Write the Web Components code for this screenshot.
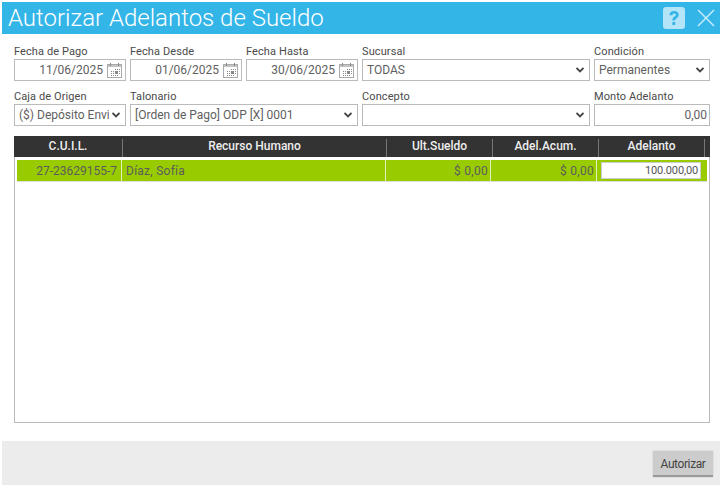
<!DOCTYPE html>
<html lang="es">
<head>
<meta charset="utf-8">
<title>Autorizar Adelantos de Sueldo</title>
<style>
	html, body { margin: 0; background: #fff; }
	body { font-family: Roboto, "Liberation Sans", sans-serif; overflow: hidden; }
</style>
</head>
<body>
<template id="tpl-dialog">
	<style>
		:host { display: flex; flex-direction: column; width: 718px; height: 483px; margin: 2px; background: #fff; }
		header { height: 32px; flex: none; display: flex; align-items: center; background: #33b5e8; color: #fff; padding: 0 5px 0 6px; box-sizing: border-box; }
		h1 { flex: 1; margin: 0; font-size: 24px; font-weight: 300; line-height: 32px; }
		.help { display: block; margin-right: 12px; }
		.close { display: block; }
		main { flex: 1; display: flex; flex-direction: column; padding: 11px 10px 18px 12px; min-height: 0; }
		footer { flex: none; height: 44px; background: #ececec; display: flex; justify-content: flex-end; align-items: flex-start; padding: 10px 7px 0 0; box-sizing: border-box; }
	</style>
	<header>
		<h1><slot name="title"></slot></h1>
		<svg class="help" width="22" height="22" viewBox="0 0 22 22">
			<rect width="22" height="22" rx="3" fill="#b4e4f8"/>
			<path d="M6.500 8.200C6.500 5.600 8.400 4 11.100 4c2.700 0 4.600 1.500 4.600 3.800 0 1.700-.9 2.600-2.100 3.400-1.100.7-1.400 1.100-1.400 2.300h-2.800c0-2 .5-2.900 1.800-3.800 1-.7 1.600-1.100 1.600-1.800 0-.8-.7-1.300-1.600-1.300-1 0-1.700.6-1.800 1.700z" fill="#33b5e8"/>
			<rect x="9.400" y="15" width="2.800" height="3" fill="#33b5e8"/>
		</svg>
		<svg class="close" width="18" height="18" viewBox="0 0 18 18" fill="none" stroke="#c6ecfb" stroke-width="1.500">
			<path d="M1 1l16 16M17 1L1 17"/>
		</svg>
	</header>
	<main><slot></slot></main>
	<footer><slot name="footer"></slot></footer>
</template>

<template id="tpl-form-grid">
	<style>
		:host { display: grid; grid-template-columns: 112px 112px 112px 228px 116px; column-gap: 4px; row-gap: 9px; flex: none; }
	</style>
	<slot></slot>
</template>

<template id="tpl-form-field">
	<style>
		:host { display: block; font-size: 11px; color: #4a4a4a; }
		label { display: block; height: 14px; line-height: 14px; letter-spacing: .1px; }
		.box { display: flex; align-items: center; height: 22px; box-sizing: border-box; border: 1px solid #bbb; background: #fff; color: #5f5f5f; font-size: 12px; }
		.txt { flex: 1; min-width: 0; white-space: nowrap; overflow: hidden; }
		:host([kind="date"]) .txt { text-align: right; padding-right: 4px; }
		:host([kind="number"]) .txt { text-align: right; padding-right: 2px; }
		:host([kind="select"]) .txt { padding-left: 4px; }
		.chev { flex: none; margin: 0 5px 0 3px; display: none; }
		:host([kind="select"]) .chev { display: block; }
		.cal { flex: none; margin-right: 3px; display: none; }
		:host([kind="date"]) .cal { display: block; }
	</style>
	<label></label>
	<div class="box">
		<div class="txt"><slot></slot></div>
		<svg class="chev" width="8" height="6" viewBox="0 0 8 6" fill="none" stroke="#444" stroke-width="1.800"><path d="M.5.9L4 4.500 7.500.9"/></svg>
		<svg class="cal" width="15" height="15" viewBox="0 0 15 15">
			<rect x=".5" y="1.500" width="14" height="13" fill="#fff" stroke="#aaa"/>
			<rect x="1" y="2" width="13" height="2" fill="#c4c4c4"/>
			<path d="M3.500 0v3M11.500 0v3" stroke="#888"/>
			<path d="M8 6h1v1H8zM10 6h1v1h-1zM12 6h1v1h-1zM4 8h1v1H4zM6 8h1v1H6zM8 8h3v3H8zM12 8h1v1h-1zM4 10h1v1H4zM6 10h1v1H6zM12 10h1v1h-1zM4 12h1v1H4zM6 12h1v1H6zM8 12h1v1H8zM10 12h1v1h-1z" fill="#888"/>
		</svg>
	</div>
</template>

<template id="tpl-data-grid">
	<style>
		:host { display: flex; flex-direction: column; flex: 1; min-height: 0; margin-top: 10px; border: solid #bbb; border-width: 0 1px 1px 1px; }
		.head { flex: none; height: 21px; margin: 0 -1px; background: #333; padding-right: 5px; display: grid; grid-template-columns: var(--cols); align-items: end; }
		.body { flex: 1; padding: 3px 2px 0 2px; }
	</style>
	<div class="head"><slot name="head"></slot></div>
	<div class="body"><slot></slot></div>
</template>

<template id="tpl-grid-head">
	<style>
		:host { display: block; height: 15px; padding-bottom: 3px; line-height: 15px; text-align: center; color: #eee; font-size: 12px; font-weight: 500; border-right: 1px solid #777; }
	</style>
	<slot></slot>
</template>

<template id="tpl-grid-row">
	<style>
		:host { display: grid; grid-template-columns: 105px 264px 105px 106px 110px; height: 22px; box-sizing: border-box; background: #9c0; border-bottom: 1px solid #ddd; }
	</style>
	<slot></slot>
</template>

<template id="tpl-grid-cell">
	<style>
		:host { display: flex; align-items: center; height: 21px; box-sizing: border-box; border-right: 1px solid #e4efc0; padding: 1px 2px 0 4px; font-size: 12px; white-space: nowrap; color: #5c5c5c; }
		:host([align="right"]) { justify-content: flex-end; }
		:host(:last-child) { border-right: 0; padding: 0 6px 0 4px; }
	</style>
	<slot></slot>
</template>

<template id="tpl-cell-input">
	<style>
		:host { display: block; width: 100%; height: 17px; line-height: 16px; box-sizing: border-box; background: #fff; border: 1px solid #ccc; text-align: right; padding-right: 2px; color: #555; font-size: 11px; letter-spacing: -.15px; }
	</style>
	<slot></slot>
</template>

<template id="tpl-action-button">
	<style>
		:host { display: block; width: 60px; height: 26px; line-height: 26px; text-align: center; box-sizing: border-box; background: #ccc; border-bottom: 2px solid #999; color: #444; font-size: 12px; letter-spacing: -.4px; box-shadow: 0 0 2px rgba(0,0,0,.15); }
	</style>
	<slot></slot>
</template>

<app-dialog>
	<span slot="title">Autorizar Adelantos de Sueldo</span>
	<form-grid>
		<form-field label="Fecha de Pago" kind="date">11/06/2025</form-field>
		<form-field label="Fecha Desde" kind="date">01/06/2025</form-field>
		<form-field label="Fecha Hasta" kind="date">30/06/2025</form-field>
		<form-field label="Sucursal" kind="select">TODAS</form-field>
		<form-field label="Condición" kind="select">Permanentes</form-field>
		<form-field label="Caja de Origen" kind="select">($) Depósito Enviado</form-field>
		<form-field label="Talonario" kind="select" style="grid-column: span 2">[Orden de Pago] ODP [X] 0001</form-field>
		<form-field label="Concepto" kind="select"></form-field>
		<form-field label="Monto Adelanto" kind="number">0,00</form-field>
	</form-grid>
	<data-grid style="--cols: 109px 264px 106px 106px 106px">
		<grid-head slot="head">C.U.I.L.</grid-head>
		<grid-head slot="head">Recurso Humano</grid-head>
		<grid-head slot="head">Ult.Sueldo</grid-head>
		<grid-head slot="head">Adel.Acum.</grid-head>
		<grid-head slot="head">Adelanto</grid-head>
		<grid-row>
			<grid-cell align="right" style="padding-right: 4px">27-23629155-7</grid-cell>
			<grid-cell style="letter-spacing: .25px">Díaz, Sofía</grid-cell>
			<grid-cell align="right" style="letter-spacing: .3px">$ 0,00</grid-cell>
			<grid-cell align="right" style="letter-spacing: .3px">$ 0,00</grid-cell>
			<grid-cell><cell-input>100.000,00</cell-input></grid-cell>
		</grid-row>
	</data-grid>
	<action-button slot="footer">Autorizar</action-button>
</app-dialog>

<script>
	const plain = (name, tplId) => {
		customElements.define(name, class extends HTMLElement {
			constructor() {
				super();
				this.attachShadow({mode: 'open'}).appendChild(document.getElementById(tplId).content.cloneNode(true));
			}
		});
	};

	plain('app-dialog', 'tpl-dialog');
	plain('form-grid', 'tpl-form-grid');
	plain('data-grid', 'tpl-data-grid');
	plain('grid-head', 'tpl-grid-head');
	plain('grid-row', 'tpl-grid-row');
	plain('grid-cell', 'tpl-grid-cell');
	plain('cell-input', 'tpl-cell-input');
	plain('action-button', 'tpl-action-button');

	class FormField extends HTMLElement {
		constructor() {
			super();
			this.attachShadow({mode: 'open'}).appendChild(document.getElementById('tpl-form-field').content.cloneNode(true));
		}
		connectedCallback() {
			this.shadowRoot.querySelector('label').textContent = this.getAttribute('label');
		}
	}
	customElements.define('form-field', FormField);
</script>
</body>
</html>
